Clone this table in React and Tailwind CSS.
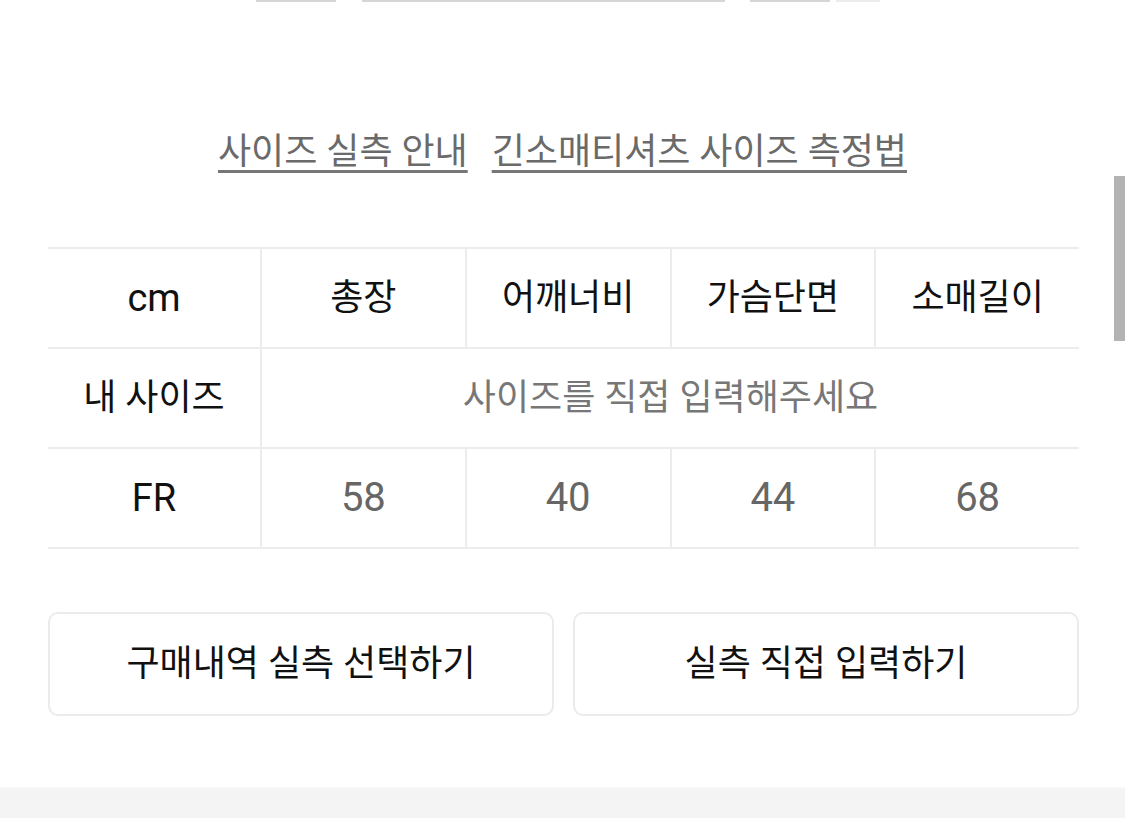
export default function App() {
  const heads = ["총장", "어깨너비", "가슴단면", "소매길이"];
  const values = ["58", "40", "44", "68"];

  return (
    <div className="relative min-h-[818px] bg-white flex flex-col font-['Roboto','Noto_Sans_CJK_KR',sans-serif] text-[#111]">
      {/* cut-off content above */}
      <div className="flex h-[3px] items-start">
        <div className="ml-[256px] w-[80px] h-[2px] bg-[#d6d6d6]" />
        <div className="ml-[26px] w-[363px] h-[2px] bg-[#d6d6d6]" />
        <div className="ml-[25px] w-[80px] h-[2px] bg-[#d6d6d6]" />
        <div className="ml-[6px] w-[44px] h-[2px] bg-[#ececec]" />
      </div>

      {/* Links */}
      <div className="mt-[129px] h-[40px] flex justify-center gap-[24px] text-[36px] leading-[40px] text-[#6a6a6a]">
        <a className="underline decoration-[3px] underline-offset-[6px] decoration-[#777]">사이즈 실측 안내</a>
        <a className="underline decoration-[3px] underline-offset-[6px] decoration-[#777]">긴소매티셔츠 사이즈 측정법</a>
      </div>

      {/* Size table */}
      <div className="mt-[75px] ml-12 w-[1031px] border-t-2 border-[#ececec] text-[36px]">
        <div className="grid grid-cols-[212px_repeat(4,1fr)] h-[100px] border-b-2 border-[#ececec]">
          <div className="flex items-center justify-center text-[38px]">cm</div>
          {heads.map((h) => (
            <div key={h} className="flex items-center justify-center border-l-2 border-[#ececec]">
              {h}
            </div>
          ))}
        </div>
        <div className="grid grid-cols-[212px_1fr] h-[100px] border-b-2 border-[#ececec]">
          <div className="flex items-center justify-center">내 사이즈</div>
          <div className="flex items-center justify-center border-l-2 border-[#ececec] text-[#777]">
            사이즈를 직접 입력해주세요
          </div>
        </div>
        <div className="grid grid-cols-[212px_repeat(4,1fr)] h-[100px] border-b-2 border-[#ececec]">
          <div className="flex items-center justify-center text-[38px]">FR</div>
          {values.map((v, i) => (
            <div key={i} className="flex items-center justify-center border-l-2 border-[#ececec] text-[#666] text-[40px]">
              {v}
            </div>
          ))}
        </div>
      </div>

      {/* Buttons */}
      <div className="mt-[63px] ml-12 w-[1031px] flex gap-[19px] text-[36px]">
        <button className="flex-1 h-[104px] rounded-[10px] border-2 border-[#ebebeb] bg-white">
          구매내역 실측 선택하기
        </button>
        <button className="flex-1 h-[104px] rounded-[10px] border-2 border-[#ebebeb] bg-white">
          실측 직접 입력하기
        </button>
      </div>

      {/* Bottom band */}
      <div className="mt-[71px] flex-1 min-h-[31px] bg-[#f4f4f4] border-t-2 border-[#f7f7f7]" />

      {/* Scrollbar overlay */}
      <div className="absolute right-0 top-[176px] w-[11px] h-[165px] bg-[#b3b3b3]" />
    </div>
  );
}
